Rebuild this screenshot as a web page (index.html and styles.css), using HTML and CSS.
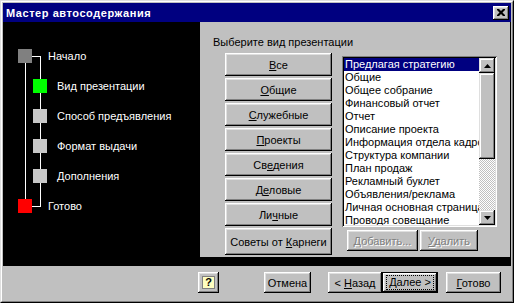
FILE: index.html
```html
<!DOCTYPE html>
<html lang="ru">
<head>
<meta charset="utf-8">
<title>Мастер автосодержания</title>
<link rel="stylesheet" href="styles.css">
</head>
<body>
<div class="window">
  <div class="frame">
    <div class="titlebar">
      <span class="title">Мастер автосодержания</span>
      <span class="close"><svg width="8" height="7" viewBox="0 0 8 7"><path d="M0 0h2l2 2 2-2h2v1L5.5 3.5 8 6v1H6L4 5 2 7H0V6l2.5-2.5L0 1z" fill="#000"/></svg></span>
    </div>
    <div class="content">
      <div class="tree">
        <div class="ln ln-left"></div>
        <div class="ln ln-right"></div>
        <div class="ln ln-top"></div>
        <div class="ln ln-bottom"></div>
        <div class="step outer"><span class="sq sq-start"></span><span class="lbl">Начало</span></div>
        <div class="step inner"><span class="sq sq-green"></span><span class="lbl">Вид презентации</span></div>
        <div class="step inner"><span class="sq sq-gray"></span><span class="lbl">Способ предъявления</span></div>
        <div class="step inner"><span class="sq sq-gray"></span><span class="lbl">Формат выдачи</span></div>
        <div class="step inner"><span class="sq sq-gray"></span><span class="lbl">Дополнения</span></div>
        <div class="step outer"><span class="sq sq-red"></span><span class="lbl">Готово</span></div>
      </div>
      <div class="panel">
        <div class="prompt">Выберите вид презентации</div>
        <div class="row">
          <div class="cats">
            <button class="btn cat"><span><u>В</u>се</span></button>
            <button class="btn cat"><span><u>О</u>бщие</span></button>
            <button class="btn cat"><span><u>С</u>лужебные</span></button>
            <button class="btn cat"><span><u>П</u>роекты</span></button>
            <button class="btn cat"><span>Св<u>е</u>дения</span></button>
            <button class="btn cat"><span>Д<u>е</u>ловые</span></button>
            <button class="btn cat"><span>Ли<u>ч</u>ные</span></button>
            <button class="btn cat tall"><span>Советы от <u>К</u>арнеги</span></button>
          </div>
          <div class="listcol">
            <div class="listbox">
              <div class="items">
                <div class="item sel">Предлагая стратегию</div>
                <div class="item">Общие</div>
                <div class="item">Общее собрание</div>
                <div class="item">Финансовый отчет</div>
                <div class="item">Отчет</div>
                <div class="item">Описание проекта</div>
                <div class="item">Информация отдела кадров</div>
                <div class="item">Структура компании</div>
                <div class="item">План продаж</div>
                <div class="item">Рекламный буклет</div>
                <div class="item">Объявления/реклама</div>
                <div class="item">Личная основная страница</div>
                <div class="item">Проводя совещание</div>
              </div>
              <div class="scrollbar">
                <span class="sbtn"><svg width="7" height="4" viewBox="0 0 7 4"><path d="M3.5 0L7 4H0z" fill="#000"/></svg></span>
                <span class="thumb"></span>
                <span class="track"></span>
                <span class="sbtn"><svg width="7" height="4" viewBox="0 0 7 4"><path d="M0 0h7L3.5 4z" fill="#000"/></svg></span>
              </div>
            </div>
            <div class="listbtns">
              <button class="btn dis add"><span><u>Д</u>обавить...</span></button>
              <button class="btn dis del"><span><u>У</u>далить</span></button>
            </div>
          </div>
        </div>
      </div>
    </div>
    <div class="footer">
      <button class="btn help"><span class="qbox">?</span></button>
      <button class="btn cancel"><span>Отмена</span></button>
      <button class="btn back"><span>&lt; <u>Н</u>азад</span></button>
      <button class="btn next def"><span class="focus"><u>Д</u>алее &gt;</span></button>
      <button class="btn done"><span><u>Г</u>отово</span></button>
    </div>
  </div>
</div>
</body>
</html>
```
FILE: styles.css
```css
* { box-sizing: border-box; }
html, body { margin: 0; padding: 0; }
body {
  width: 514px;
  height: 303px;
  overflow: hidden;
  background: #c0c0c0;
  font-family: "Liberation Sans", Arial, sans-serif;
  font-size: 11px;
  color: #000;
}
.window {
  width: 514px;
  height: 303px;
  border: 1px solid;
  border-color: #dfdfdf #000 #000 #dfdfdf;
  background: #c0c0c0;
}
.frame {
  width: 100%;
  height: 100%;
  border: 1px solid;
  border-color: #fff #808080 #808080 #fff;
  padding: 1px;
  display: flex;
  flex-direction: column;
}
.titlebar {
  height: 19px;
  background: #000080;
  display: flex;
  align-items: center;
  justify-content: space-between;
  padding: 0 2px 0 3px;
  flex: none;
}
.title {
  color: #fff;
  font-weight: bold;
  font-size: 11px;
  letter-spacing: 0.55px;
}
.close {
  width: 16px;
  height: 14px;
  background: #c0c0c0;
  box-shadow: inset -1px -1px #000, inset 1px 1px #fff, inset -2px -2px #808080, inset 2px 2px #dfdfdf;
  display: flex;
  align-items: center;
  justify-content: center;
  padding-bottom: 1px;
}
.close svg { display: block; }

.content {
  height: 244px;
  background: #000;
  display: flex;
  flex: none;
}
.tree {
  position: relative;
  width: 197px;
  padding-top: 19px;
  color: #fff;
}
.ln { position: absolute; background: #fff; }
.ln-left { left: 22px; top: 41px; width: 1px; height: 137px; }
.ln-right { left: 37px; top: 34px; width: 1px; height: 151px; }
.ln-top { left: 29px; top: 34px; width: 8px; height: 1px; }
.ln-bottom { left: 29px; top: 184px; width: 8px; height: 1px; }
.step {
  height: 30px;
  display: flex;
  align-items: center;
}
.sq {
  position: relative;
  width: 14px;
  height: 14px;
  flex: none;
}
.outer .sq { margin-left: 15px; }
.outer .lbl { margin-left: 16px; }
.inner .sq { margin-left: 30px; }
.inner .lbl { margin-left: 10px; }
.sq-start { background: #808080; }
.sq-green { background: #00ff00; }
.sq-gray { background: #c8c8c8; }
.sq-red { background: #ff0000; }
.lbl { position: relative; }

.panel {
  width: 310px;
  height: 235px;
  background: #c0c0c0;
  padding: 14px 0 0 13px;
}
.prompt { line-height: 13px; height: 13px; margin-bottom: 4px; }
.row { display: flex; }
.cats {
  margin-left: 12px;
  width: 107px;
  display: flex;
  flex-direction: column;
  gap: 2px;
}
.btn {
  font: inherit;
  color: #000;
  background: #c0c0c0;
  border: none;
  padding: 0;
  margin: 0;
  box-shadow: inset -1px -1px #000, inset 1px 1px #fff, inset -2px -2px #808080, inset 2px 2px #dfdfdf;
  display: flex;
  align-items: center;
  justify-content: center;
  white-space: nowrap;
}
.cat { height: 23px; width: 107px; padding-top: 1px; }
.cat.tall { height: 27px; }
.listcol {
  margin-left: 10px;
  width: 155px;
  padding-top: 3px;
}
.listbox {
  height: 171px;
  width: 155px;
  background: #fff;
  box-shadow: inset 1px 1px #808080, inset -1px -1px #fff, inset 2px 2px #000, inset -2px -2px #dfdfdf;
  padding: 2px;
  display: flex;
}
.items {
  width: 135px;
  overflow: hidden;
}
.item {
  height: 13px;
  line-height: 13px;
  padding-left: 1px;
  white-space: nowrap;
  overflow: hidden;
}
.item.sel { background: #000080; color: #fff; }
.scrollbar {
  width: 16px;
  display: flex;
  flex-direction: column;
}
.sbtn {
  height: 15px;
  flex: none;
  background: #c0c0c0;
  box-shadow: inset -1px -1px #000, inset 1px 1px #dfdfdf, inset -2px -2px #808080, inset 2px 2px #fff;
  display: flex;
  align-items: center;
  justify-content: center;
}
.sbtn svg { display: block; }
.thumb {
  height: 86px;
  flex: none;
  background: #c0c0c0;
  box-shadow: inset -1px -1px #000, inset 1px 1px #dfdfdf, inset -2px -2px #808080, inset 2px 2px #fff;
}
.track {
  flex: 1;
  background: repeating-conic-gradient(#fff 0 25%, #c0c0c0 0 50%) 0 0 / 2px 2px;
}
.listbtns {
  display: flex;
  gap: 2px;
  margin: 3px 0 0 5px;
}
.dis { height: 21px; color: #808080; text-shadow: 1px 1px 0 #fff; }
.add { width: 71px; }
.del { width: 58px; }

.footer {
  flex: 1;
  display: flex;
  align-items: flex-start;
  padding: 6px 0 0 195px;
}
.footer .btn { height: 21px; }
.help { width: 21px; }
.qbox {
  width: 13px;
  height: 13px;
  background: #ffffc0;
  border: 1px solid #808080;
  font-weight: bold;
  font-size: 11px;
  line-height: 11px;
  display: flex;
  align-items: center;
  justify-content: center;
}
.cancel { width: 47px; margin-left: 45px; }
.back { width: 54px; margin-left: 17px; }
.next { width: 56px; }
.done { width: 55px; margin-left: 8px; }
.def {
  box-shadow: inset 0 0 0 1px #000, inset -2px -2px #000, inset 2px 2px #fff, inset -3px -3px #808080, inset 3px 3px #dfdfdf;
}
.focus {
  outline: 1px dotted #000;
  padding: 1px 2px;
  line-height: 11px;
}
```
